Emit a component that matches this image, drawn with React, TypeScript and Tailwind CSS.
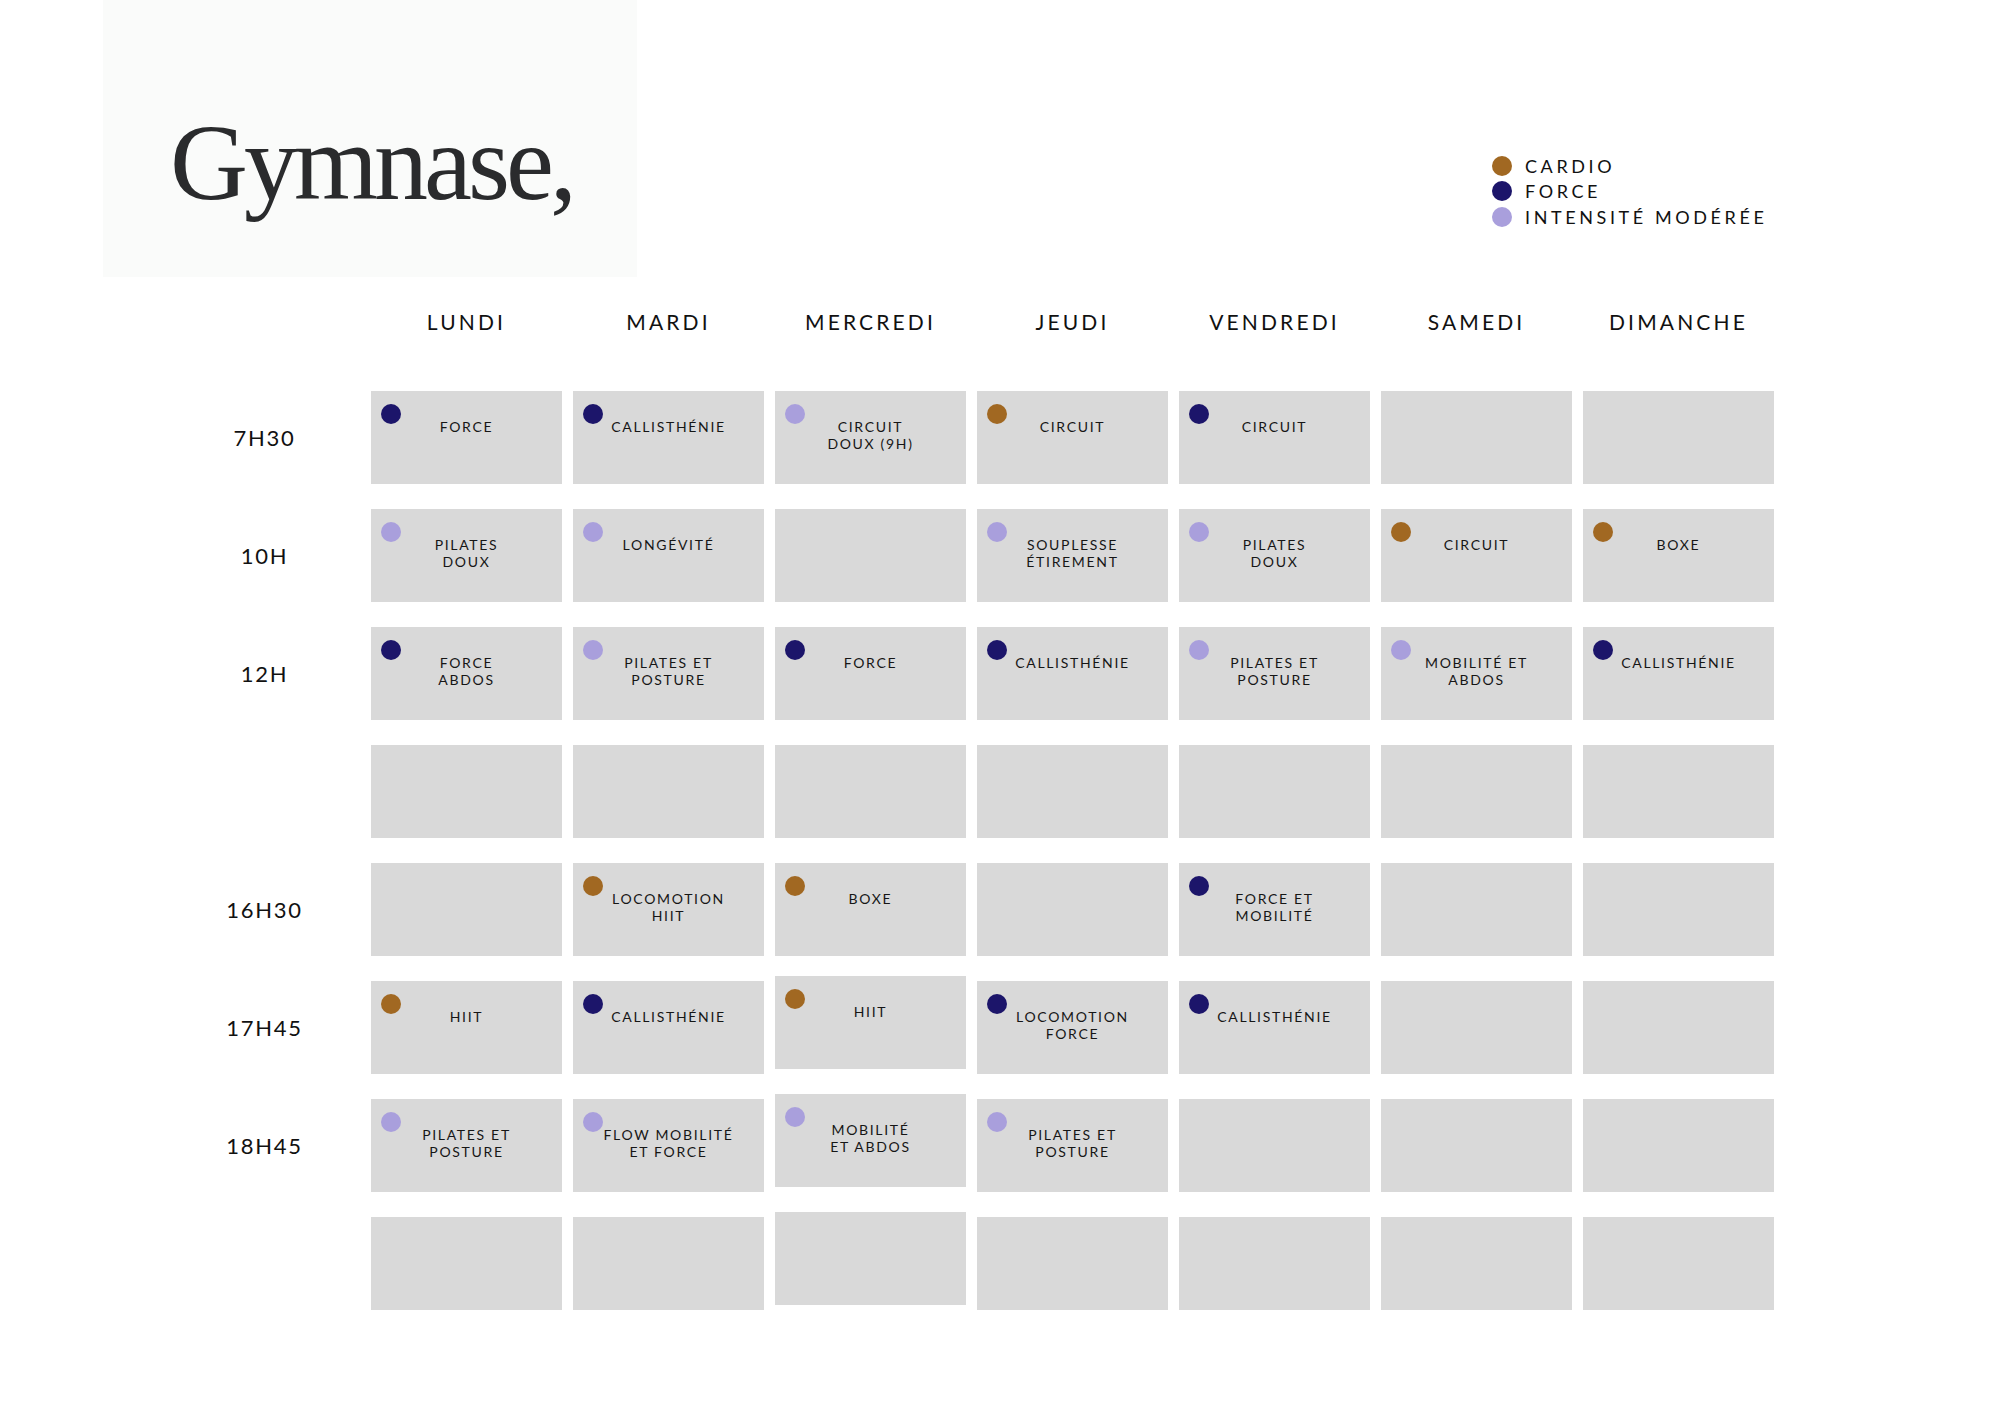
import React from "react"

type Kind = "cardio" | "force" | "modere"

interface Slot {
  kind?: Kind
  label?: string[]
  shift?: string
}

const dotColor: Record<Kind, string> = {
  cardio: "bg-[#a16822]",
  force: "bg-[#1c156a]",
  modere: "bg-[#a99fdc]",
}

const days = ["LUNDI", "MARDI", "MERCREDI", "JEUDI", "VENDREDI", "SAMEDI", "DIMANCHE"]

const E: Slot = {}

// one row per time slot, seven days each
const rows: { time: string; slots: Slot[] }[] = [
  {
    time: "7H30",
    slots: [
      { kind: "force", label: ["FORCE"] },
      { kind: "force", label: ["CALLISTHÉNIE"] },
      { kind: "modere", label: ["CIRCUIT", "DOUX (9H)"] },
      { kind: "cardio", label: ["CIRCUIT"] },
      { kind: "force", label: ["CIRCUIT"] },
      E,
      E,
    ],
  },
  {
    time: "10H",
    slots: [
      { kind: "modere", label: ["PILATES", "DOUX"] },
      { kind: "modere", label: ["LONGÉVITÉ"] },
      E,
      { kind: "modere", label: ["SOUPLESSE", "ÉTIREMENT"] },
      { kind: "modere", label: ["PILATES", "DOUX"] },
      { kind: "cardio", label: ["CIRCUIT"] },
      { kind: "cardio", label: ["BOXE"] },
    ],
  },
  {
    time: "12H",
    slots: [
      { kind: "force", label: ["FORCE", "ABDOS"] },
      { kind: "modere", label: ["PILATES ET", "POSTURE"] },
      { kind: "force", label: ["FORCE"] },
      { kind: "force", label: ["CALLISTHÉNIE"] },
      { kind: "modere", label: ["PILATES ET", "POSTURE"] },
      { kind: "modere", label: ["MOBILITÉ ET", "ABDOS"] },
      { kind: "force", label: ["CALLISTHÉNIE"] },
    ],
  },
  { time: "", slots: [E, E, E, E, E, E, E] },
  {
    time: "16H30",
    slots: [
      E,
      { kind: "cardio", label: ["LOCOMOTION", "HIIT"] },
      { kind: "cardio", label: ["BOXE"] },
      E,
      { kind: "force", label: ["FORCE ET", "MOBILITÉ"] },
      E,
      E,
    ],
  },
  {
    time: "17H45",
    slots: [
      { kind: "cardio", label: ["HIIT"] },
      { kind: "force", label: ["CALLISTHÉNIE"] },
      { kind: "cardio", label: ["HIIT"], shift: "mt-[-5px]" },
      { kind: "force", label: ["LOCOMOTION", "FORCE"] },
      { kind: "force", label: ["CALLISTHÉNIE"] },
      E,
      E,
    ],
  },
  {
    time: "18H45",
    slots: [
      { kind: "modere", label: ["PILATES ET", "POSTURE"] },
      { kind: "modere", label: ["FLOW MOBILITÉ", "ET FORCE"] },
      { kind: "modere", label: ["MOBILITÉ", "ET ABDOS"], shift: "mt-[-5px]" },
      { kind: "modere", label: ["PILATES ET", "POSTURE"] },
      E,
      E,
      E,
    ],
  },
  { time: "", slots: [E, E, E, E, E, E, E] },
]

const legend: { kind: Kind; label: string }[] = [
  { kind: "cardio", label: "CARDIO" },
  { kind: "force", label: "FORCE" },
  { kind: "modere", label: "INTENSITÉ MODÉRÉE" },
]

function Cell({ slot, last }: { slot: Slot; last?: boolean }) {
  return (
    <div
      className={`relative h-[93px] bg-[#d9d9d9] pt-[28px] text-center text-[14px] leading-[16.5px] tracking-[0.12em] text-[#161616] ${slot.shift ?? ""} ${last ? "mt-[-5px]" : ""}`}
    >
      {slot.kind && (
        <span className={`absolute left-[10px] top-[13px] size-[20px] rounded-full ${dotColor[slot.kind]}`} />
      )}
      {slot.label?.map((line) => (
        <div key={line}>{line}</div>
      ))}
    </div>
  )
}

export default function App() {
  return (
    <div className="h-[1414px] w-[2000px] bg-white font-['Lato','Noto_Sans',sans-serif] text-[#111]">
      <header className="flex h-[277px] items-start">
        <div className="ml-[103px] flex h-[277px] w-[534px] items-start bg-[#fafbfa] pl-[67px] pt-[93px]">
          <h1 className="font-['Liberation_Serif','Times_New_Roman',serif] text-[108px] leading-[140px] tracking-[-4px] text-[#2a2b2d]">
            Gymnase,
          </h1>
        </div>
        <ul className="ml-[855px] flex flex-col pt-[153px]">
          {legend.map((item) => (
            <li key={item.label} className="flex h-[25.5px] items-center gap-[13px]">
              <span className={`size-[20px] rounded-full ${dotColor[item.kind]}`} />
              <span className="text-[18px] leading-none tracking-[0.2em]">{item.label}</span>
            </li>
          ))}
        </ul>
      </header>

      <div className="ml-[169px] grid w-[1604px] grid-cols-[repeat(8,191px)] gap-x-[11px] gap-y-[25px]">
        <div className="h-[89px]" />
        {days.map((d) => (
          <div key={d} className="flex h-[89px] items-center justify-center text-[21px] tracking-[0.15em]">
            {d}
          </div>
        ))}

        {rows.map((row, r) => (
          <React.Fragment key={r}>
            <div className="flex h-[93px] items-center justify-center text-[22px] tracking-[0.08em]">
              {row.time}
            </div>
            {row.slots.map((slot, i) => (
              <Cell key={i} slot={slot} last={r === rows.length - 1 && i === 2} />
            ))}
          </React.Fragment>
        ))}
      </div>
    </div>
  )
}
